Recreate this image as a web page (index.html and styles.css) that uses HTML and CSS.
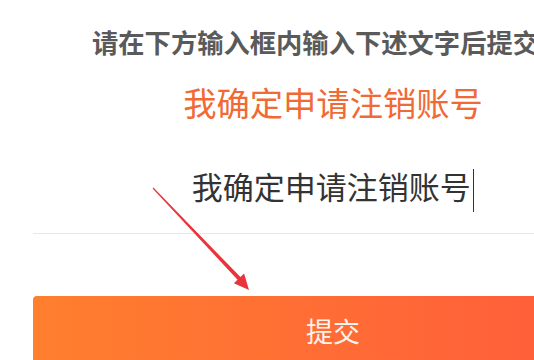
FILE: index.html
```html
<!DOCTYPE html>
<html lang="zh-CN">
<head>
<meta charset="utf-8">
<title>注销账号</title>
<link rel="stylesheet" href="styles.css">
</head>
<body>
<div class="page">
  <p class="hint">请在下方输入框内输入下述文字后提交</p>
  <p class="phrase">我确定申请注销账号</p>
  <div class="field"><span class="typed">我确定申请注销账号</span><span class="caret"></span></div>
  <button class="submit" type="button">提交</button>
  <svg class="arrow" width="600" height="360" viewBox="0 0 600 360" aria-hidden="true">
    <polygon points="120.4,187.6 207.45,277.02 211.1,273.6 216,290 200.9,283.2 204.55,279.78 119.6,188.4" fill="#e8343a"/>
  </svg>
</div>
</body>
</html>
```
FILE: styles.css
```css
html, body {
  margin: 0;
  padding: 0;
  background: #ffffff;
  overflow: hidden;
  width: 534px;
  height: 360px;
}
.page {
  position: relative;
  width: 600px;
  margin-left: 33px;
  font-family: "Noto Sans CJK SC", "Noto Sans", sans-serif;
}
.hint {
  margin: 0;
  padding: 22px 0 0 59px;
  font-size: 26.3px;
  line-height: 40px;
  font-weight: 700;
  color: #5a5a5a;
  white-space: nowrap;
}
.phrase {
  margin: 18px 0 0;
  text-align: center;
  font-size: 33.3px;
  line-height: 44px;
  color: #f06a35;
  white-space: nowrap;
}
.field {
  padding: 40px 0 21px;
  border-bottom: 1px solid #e8e8e8;
  text-align: center;
  font-size: 31px;
  line-height: 44px;
  color: #333333;
  white-space: nowrap;
}
.caret {
  display: inline-block;
  width: 1.5px;
  height: 43px;
  margin-left: 2px;
  background: #333333;
  vertical-align: middle;
}
.submit {
  display: block;
  width: 600px;
  height: 80px;
  margin-top: 62px;
  padding: 0 0 10px;
  border: none;
  border-radius: 4px;
  background: linear-gradient(90deg, #ff7f2e 0%, #ff6a36 55%, #ff5a3c 100%);
  color: #fff3ea;
  font-family: "Noto Sans CJK SC", "Noto Sans", sans-serif;
  font-size: 27px;
  line-height: 40px;
  text-align: center;
}
.arrow {
  position: absolute;
  top: 0;
  left: 0;
  overflow: visible;
  pointer-events: none;
}
```
